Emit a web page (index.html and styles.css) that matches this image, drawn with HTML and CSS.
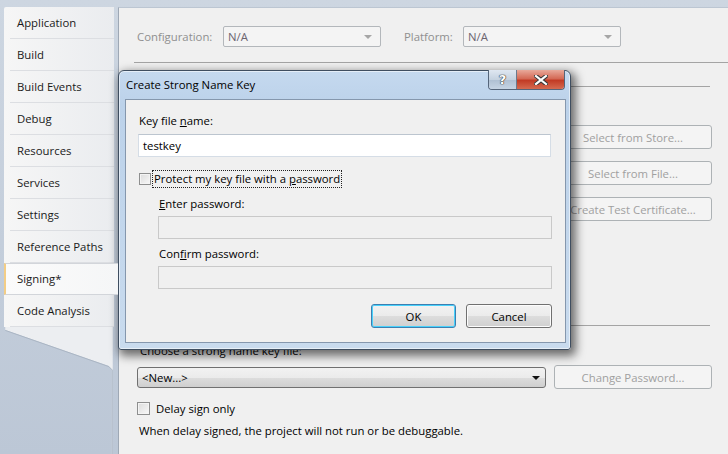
FILE: index.html
```html
<!DOCTYPE html>
<html>
<head>
<meta charset="utf-8">
<title>Signing</title>
<link rel="stylesheet" href="styles.css">
</head>
<body>
<div class="window">
  <aside class="sidebar">
    <ul class="tabs">
      <li class="tab">Application</li>
      <li class="tab">Build</li>
      <li class="tab">Build Events</li>
      <li class="tab">Debug</li>
      <li class="tab">Resources</li>
      <li class="tab">Services</li>
      <li class="tab">Settings</li>
      <li class="tab">Reference Paths</li>
      <li class="tab selected">Signing*</li>
      <li class="tab">Code Analysis</li>
    </ul>
    <svg class="tail" width="110" height="130" viewBox="0 0 110 130">
      <polygon points="0,0 110,0 110,130 109,130 109,44 106,40 0,3" fill="#eceef1"/>
      <polyline points="0,3.5 106,40.5 109.5,44 109.5,130" fill="none" stroke="#a9b4c3" stroke-width="1"/>
    </svg>
  </aside>
  <main class="panel">
    <div class="config-row">
      <span class="cfg-label">Configuration:</span>
      <div class="dd"><span>N/A</span><i class="arrow"></i></div>
      <span class="cfg-label platform">Platform:</span>
      <div class="dd"><span>N/A</span><i class="arrow"></i></div>
    </div>
    <div class="sep sep-top"></div>
    <div class="sep sep-manifest"></div>
    <div class="cert-buttons">
      <button class="btn">Select from Store...</button>
      <button class="btn">Select from File...</button>
      <button class="btn">Create Test Certificate...</button>
    </div>
    <div class="sep sep-sign"></div>
    <div class="key-label">Choose a strong name key file:</div>
    <div class="key-row">
      <div class="combo"><span>&lt;New...&gt;</span><i class="arrow dark"></i></div>
      <button class="btn">Change Password...</button>
    </div>
    <div class="check-row"><span class="cb"></span><span>Delay sign only</span></div>
    <p class="note">When delay signed, the project will not run or be debuggable.</p>
  </main>
</div>

<div class="dialog">
  <div class="titlebar">
    <span class="title">Create Strong Name Key</span>
    <div class="caption-btns">
      <span class="cap help">?</span>
      <span class="cap close"><svg width="14" height="10" viewBox="0 0 14 10"><path d="M2 1 L12 9 M12 1 L2 9" stroke="#3a3a3a" stroke-width="4.2" stroke-linecap="square"/><path d="M2 1 L12 9 M12 1 L2 9" stroke="#ffffff" stroke-width="2.2" stroke-linecap="square"/></svg></span>
    </div>
  </div>
  <div class="client">
    <div class="d-label first">Key file <u>n</u>ame:</div>
    <div class="tb tb-key">testkey</div>
    <div class="d-check"><span class="cb"></span><span class="focus">Protect my key file with a <u>p</u>assword</span></div>
    <div class="d-label indent"><u>E</u>nter password:</div>
    <div class="tb tb-dis"></div>
    <div class="d-label indent second">Con<u>f</u>irm password:</div>
    <div class="tb tb-dis"></div>
    <div class="d-buttons">
      <button class="dbtn ok">OK</button>
      <button class="dbtn">Cancel</button>
    </div>
  </div>
</div>
</body>
</html>
```

FILE: styles.css
```css
* { box-sizing: border-box; }
html, body { margin: 0; padding: 0; }
body {
  width: 728px;
  height: 454px;
  overflow: hidden;
  position: relative;
  font-family: "Open Sans", "Noto Sans", sans-serif;
  font-size: 11.35px;
  color: #000;
  background: linear-gradient(#cdd6e1, #bcc7d6);
}
.window {
  display: flex;
  height: 454px;
  padding-top: 7px;
}
.sidebar {
  width: 114px;
  padding-left: 4px;
  display: flex;
  flex-direction: column;
}
.tabs {
  list-style: none;
  margin: 0;
  padding: 0;
  background: linear-gradient(to right, #f6f6f6, #eaecef);
  border-top-left-radius: 2px;
}
.tab {
  height: 32px;
  line-height: 31px;
  padding-left: 13px;
  position: relative;
  color: #1a1a1a;
}
.tab::after {
  content: "";
  position: absolute;
  left: 6px;
  right: 0;
  bottom: 0;
  height: 1px;
  background: #dcdee2;
}
.tab.selected {
  margin-right: -4px;
  background: linear-gradient(to right, #fbfbfb, #f5f6f7);
  border-top: 1px solid #d2d5da;
  border-bottom: 1px solid #d2d5da;
  border-left: 2px solid #f3cd86;
  line-height: 29px;
  padding-left: 11px;
  z-index: 1;
}
.tab.selected::after { display: none; }
.tail { display: block; }

.panel {
  flex: 1;
  margin-left: 4px;
  background: #f0f0f0;
  border-left: 1px solid #9ea8b5;
  border-top: 1px solid #bcc6d2;
}
.config-row {
  display: flex;
  align-items: center;
  margin-top: 18px;
  padding-left: 18px;
  height: 21px;
}
.cfg-label {
  color: #8f8f8f;
  width: 86px;
}
.cfg-label.platform { width: 59px; margin-left: 23px; }
.dd {
  width: 158px;
  height: 21px;
  border: 1px solid #b3b7bb;
  border-radius: 2px;
  background: #f4f4f4;
  color: #6c6570;
  padding-left: 4px;
  line-height: 19px;
  position: relative;
}
.arrow {
  position: absolute;
  right: 8px;
  top: 8px;
  width: 0;
  height: 0;
  border-left: 4px solid transparent;
  border-right: 4px solid transparent;
  border-top: 4px solid #a6a6a6;
}
.arrow.dark { border-top-color: #111; right: 5px; top: 8px; }
.sep {
  height: 1px;
  background: #a4a4a4;
  margin-left: 15px;
}
.sep-top { margin-top: 15px; }
.sep-manifest { margin-top: 23px; margin-right: 18px; }
.sep-sign { margin-top: 104px; margin-right: 18px; }
.cert-buttons {
  display: flex;
  flex-direction: column;
  align-items: flex-end;
  gap: 12px;
  margin-top: 38px;
  padding-right: 16px;
}
.btn {
  width: 158px;
  height: 24px;
  border: 1px solid #adb2b5;
  border-radius: 3px;
  background: #f4f4f4;
  color: #a0a0a0;
  font: inherit;
  padding: 0;
}
.key-label {
  margin-top: 17px;
  padding-left: 21px;
  line-height: 16px;
}
.key-row {
  display: flex;
  align-items: center;
  gap: 8px;
  margin-top: 6px;
  padding-left: 18px;
}
.combo {
  width: 409px;
  height: 21px;
  border: 1px solid #707070;
  border-radius: 3px;
  background: linear-gradient(#f2f2f2 0%, #ebebeb 50%, #dddddd 51%, #cfcfcf 100%);
  padding-left: 4px;
  line-height: 19px;
  position: relative;
}
.check-row {
  display: flex;
  align-items: center;
  gap: 6px;
  margin-top: 11px;
  padding-left: 18px;
  height: 16px;
}
.cb {
  width: 13px;
  height: 13px;
  border: 1px solid #8e8f8f;
  background: linear-gradient(135deg, #dcdcdc, #f8f8f8);
  box-shadow: inset 0 0 0 1px #f4f4f4;
  flex: none;
}
.note {
  margin: 7px 0 0;
  padding-left: 20px;
  line-height: 16px;
}

/* Dialog */
.dialog {
  position: absolute;
  left: 118px;
  top: 70px;
  width: 453px;
  height: 280px;
  border: 1px solid #3f4e60;
  border-radius: 6px 6px 3px 3px;
  background: linear-gradient(to bottom, #c5d9ef 0%, #bcd2ea 12%, #c9dbee 100%);
  box-shadow: 3px 4px 10px 2px rgba(0,0,0,0.55), inset 0 0 0 1px rgba(255,255,255,0.55);
  display: flex;
  flex-direction: column;
  padding: 0 4px 6px 6px;
}
.titlebar {
  height: 28px;
  position: relative;
  flex: none;
}
.title {
  position: absolute;
  left: 1px;
  top: 6px;
  line-height: 16px;
}
.caption-btns {
  position: absolute;
  right: 1px;
  top: -1px;
  display: flex;
  border: 1px solid #55657a;
  border-top: none;
  border-radius: 0 0 4px 4px;
  overflow: hidden;
}
.cap {
  height: 19px;
  display: flex;
  align-items: center;
  justify-content: center;
}
.help {
  width: 28px;
  background: linear-gradient(#dfe7f1, #c5d2e0 50%, #aebfd2 51%, #c6d4e4);
  border-right: 1px solid #6a7a8e;
  color: #fff;
  font-family: "DejaVu Sans", sans-serif;
  font-weight: bold;
  font-size: 13px;
  text-shadow: 0 0 1px #333, 0 0 1px #333, 0 0 1px #333;
}
.close {
  width: 47px;
  background: linear-gradient(#e9a99a, #d46a56 45%, #c23b25 55%, #d56a50);
}
.client {
  flex: 1;
  background: #f0f0f0;
  border: 1px solid #8597ad;
  display: flex;
  flex-direction: column;
  padding: 0 13px 0 12px;
}
.d-label {
  line-height: 16px;
  padding-left: 1px;
}
.d-label.first { margin-top: 13px; }
.d-label.indent { margin-left: 20px; margin-top: 9px; }
.d-label.second { margin-top: 7px; }
.tb {
  height: 23px;
  margin-top: 5px;
  border: 1px solid #d5dde6;
  border-top-color: #bcc5cf;
  background: #fff;
  line-height: 21px;
  padding-left: 4px;
}
.tb-key { width: 413px; }
.tb-dis {
  margin-left: 20px;
  width: 394px;
  margin-top: 4px;
  background: #f0f0f0;
  border: 1px solid #c9c9c9;
}
.d-check {
  display: flex;
  align-items: center;
  gap: 2px;
  margin-top: 14px;
  margin-left: 1px;
  height: 16px;
}
.d-check .cb { width: 12px; height: 12px; }
.focus {
  outline: 1px dotted #222;
  line-height: 16px;
  padding: 0 1px;
}
.d-buttons {
  display: flex;
  justify-content: flex-end;
  gap: 10px;
  margin-top: 15px;
}
.dbtn {
  width: 86px;
  height: 24px;
  font: inherit;
  color: #000;
  padding: 0;
  border: 1px solid #707070;
  border-radius: 3px;
  background: linear-gradient(#f2f2f2 0%, #ebebeb 50%, #dddddd 51%, #cfcfcf 100%);
  box-shadow: inset 0 0 0 1px #fcfcfc;
}
.dbtn.ok {
  width: 85px;
  border-color: #3c7fb1;
  box-shadow: inset 0 0 0 1px #48d1fb;
}
u { text-decoration: underline; text-underline-offset: 1px; }
```
